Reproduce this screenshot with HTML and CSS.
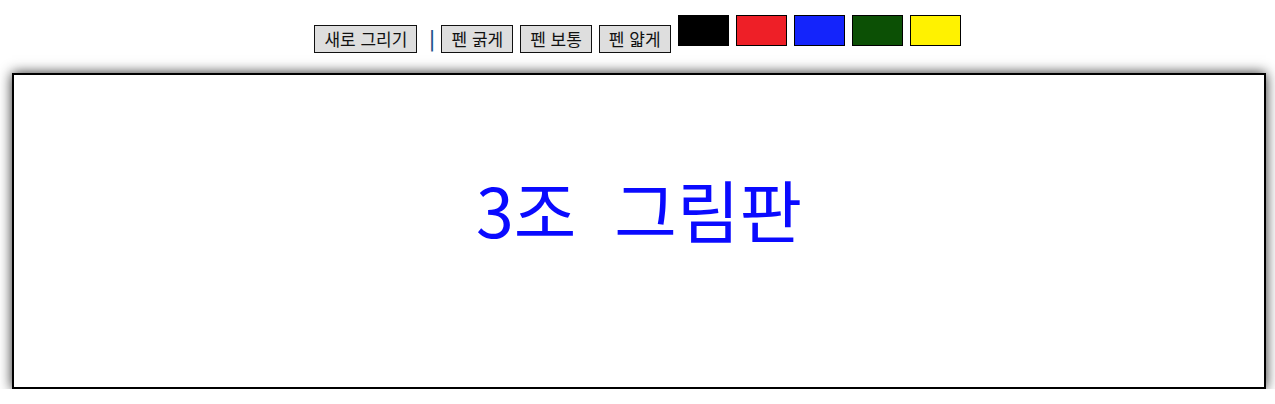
FILE: index.html
```html
<!DOCTYPE html>
<html lang="ko">
<head>
    <meta charset="UTF-8">
    <meta name="viewport" content="width=device-width, initial-scale=1.0">
    <title>3조 그림판</title>
    <link rel="stylesheet" href="styles.css">
</head>
<body>

    <!-- 도구 모음 -->
    <div class="toolbar">
        <button class="tool">새로 그리기</button>
        <span class="sep">|</span>
        <button class="tool">펜 굵게</button>
        <button class="tool">펜 보통</button>
        <button class="tool">펜 얇게</button>
        <span class="swatch black"></span>
        <span class="swatch red"></span>
        <span class="swatch blue"></span>
        <span class="swatch green"></span>
        <span class="swatch yellow"></span>
    </div>

    <!-- 그림판 -->
    <div class="board">
        <h1 class="title">3조&nbsp;&nbsp;그림판</h1>
    </div>

</body>
</html>
```

FILE: styles.css
```css
body {
    margin: 0;
    font-family: "Noto Sans CJK KR", "Noto Sans", sans-serif;
    background-color: #fff;
}
.toolbar {
    text-align: center;
    padding-top: 15px;
    height: 73px;
    box-sizing: border-box;
    font-size: 0;
}
.tool {
    font-family: "Noto Sans CJK KR", "Noto Sans", sans-serif;
    font-size: 17px;
    line-height: 22px;
    height: 28px;
    padding: 1px 9px 0;
    background-color: #dedede;
    border: 1px solid #111;
    color: #111;
    margin-right: 7px;
    vertical-align: baseline;
}
.sep {
    font-family: "DejaVu Sans", sans-serif;
    font-size: 21px;
    color: #1f4f8a;
    margin: 0 6px 0 4px;
    vertical-align: baseline;
}
.swatch {
    display: inline-block;
    width: 49px;
    height: 29px;
    border: 1px solid #000;
    margin-right: 7px;
}
.swatch:last-child {
    margin-right: 0;
}
.black { background-color: #000; }
.red { background-color: #ee1f27; }
.blue { background-color: #1424fb; }
.green { background-color: #0c5005; }
.yellow { background-color: #fff200; }
.board {
    margin-left: 12px;
    width: 1250px;
    height: 312px;
    border: 2px solid #000;
    box-shadow: 0 0 12px rgba(0, 0, 0, 0.85);
    display: flex;
    align-items: center;
    justify-content: center;
}
.title {
    margin: 0;
    font-family: "Noto Sans CJK KR", sans-serif;
    font-weight: normal;
    font-size: 68px;
    color: #0a0aff;
    line-height: 1;
    padding-bottom: 44px;
}
```
